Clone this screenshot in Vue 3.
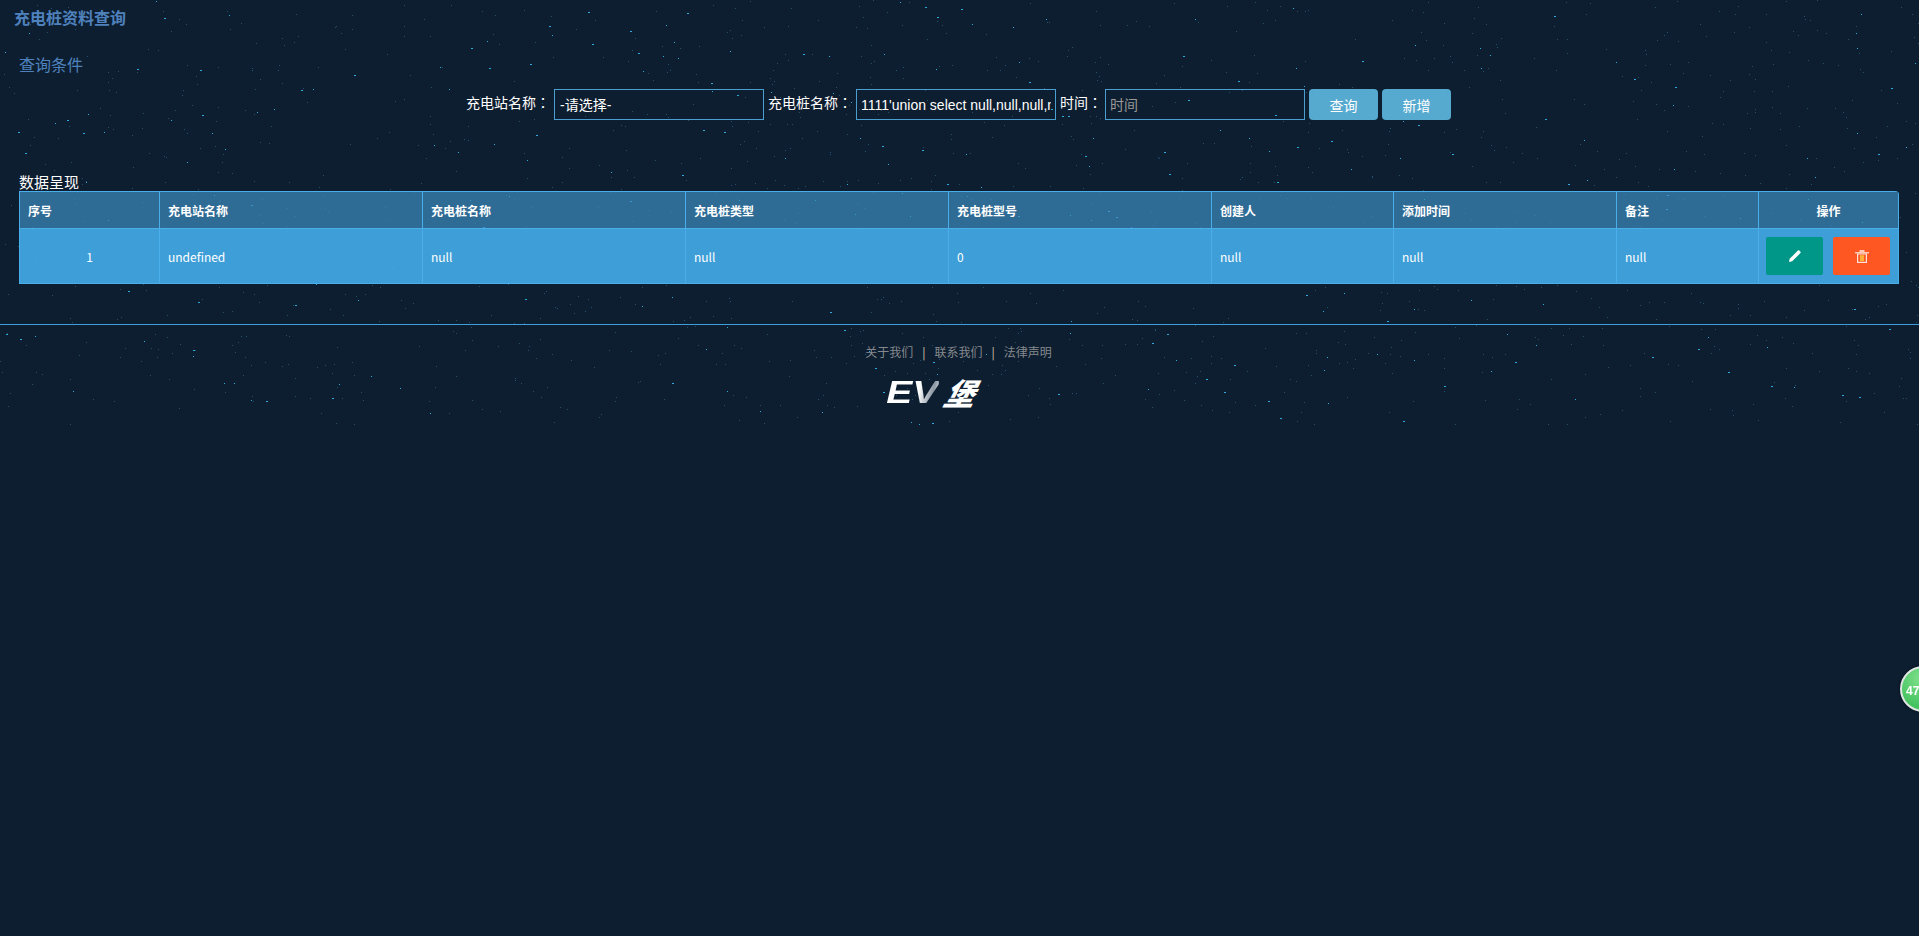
<script setup>
import { ref } from 'vue'

// seeded so the star field stays the same between loads
let seed = 4711
function rnd() {
  seed = (seed * 16807) % 2147483647
  return seed / 2147483647
}

const stars = []
for (let i = 0; i < 1700; i++) {
  const bright = rnd() > 0.82
  stars.push({
    x: Math.floor(rnd() * 1919),
    y: Math.floor(rnd() * 425),
    w: bright && rnd() > 0.6 ? 2 : 1,
    color: bright ? '#2fa8dc' : '#24506e'
  })
}

const columns = ['序号', '充电站名称', '充电桩名称', '充电桩类型', '充电桩型号', '创建人', '添加时间', '备注', '操作']
const row = ['undefined', 'null', 'null', '0', 'null', 'null', 'null']
const pileName = ref("1111'union select null,null,null,null,null,null,null")
</script>

<template>
  <div class="page">
    <svg class="stars" width="1919" height="425">
      <rect
        v-for="(s, i) in stars"
        :key="i"
        :x="s.x"
        :y="s.y"
        :width="s.w"
        height="1"
        :fill="s.color"
      />
    </svg>

    <div class="content">
      <div class="page-title">充电桩资料查询</div>
      <div class="section-title">查询条件</div>

      <form class="filters" @submit.prevent>
        <label>充电站名称<span class="colon">：</span></label>
        <select class="field station">
          <option>-请选择-</option>
        </select>
        <label>充电桩名称<span class="colon">：</span></label>
        <input v-model="pileName" class="field" type="text" />
        <label class="time-label">时间<span class="colon">：</span></label>
        <input class="field" type="text" placeholder="时间" />
        <button class="btn" type="button">查询</button>
        <button class="btn" type="button">新增</button>
      </form>

      <div class="data-title">数据呈现</div>
      <div class="table-wrap">
        <table class="data-table">
          <colgroup>
            <col style="width: 140px" />
            <col style="width: 263px" />
            <col style="width: 263px" />
            <col style="width: 263px" />
            <col style="width: 263px" />
            <col style="width: 182px" />
            <col style="width: 223px" />
            <col style="width: 142px" />
            <col />
          </colgroup>
          <thead>
            <tr>
              <th v-for="(col, index) in columns" :key="col" :class="{ center: index === 8 }">{{ col }}</th>
            </tr>
          </thead>
          <tbody>
            <tr>
              <td class="center">1</td>
              <td v-for="(cell, index) in row" :key="index">{{ cell }}</td>
              <td class="actions">
                <button class="icon-btn edit" type="button">
                  <svg width="14" height="14" viewBox="0 0 14 14">
                    <path d="M1 13l.7-3.200L9.900 1.600a1 1 0 0 1 1.400 0l1.100 1.100a1 1 0 0 1 0 1.400L4.200 12.300z" fill="#fff" />
                  </svg>
                </button>
                <button class="icon-btn remove" type="button">
                  <svg width="14" height="14" viewBox="0 0 14 14">
                    <path d="M0 3h14v1.600H0z" fill="#ffc9b5" />
                    <path d="M4.500 3V1h5v2" fill="#ffc9b5" />
                    <path d="M2 4.600h10V14H2z" fill="#ffe3d8" />
                    <path d="M3.200 5.600h7.600v7.200H3.200z" fill="#ff5722" />
                    <path d="M5 6.200h4v6H5z" fill="#ffb03a" />
                  </svg>
                </button>
              </td>
            </tr>
          </tbody>
        </table>
      </div>

      <footer class="footer">
        <div class="links">
          <a>关于我们</a>
          <span class="sep">|</span>
          <a>联系我们</a>
          <span class="sep">|</span>
          <a>法律声明</a>
        </div>
        <div class="logo">
          <span class="logo-ev">EV</span>
          <span class="logo-cn">堡</span>
        </div>
      </footer>
    </div>

    <div class="speed-ball">47</div>
  </div>
</template>

<style>
html,
body {
  background: #0d1e30;
}
</style>

<style scoped>
.page {
  position: relative;
  height: 936px;
  overflow: hidden;
  background: #0d1e30;
  font-family: "Noto Sans CJK SC", "Liberation Sans", sans-serif;
  color: #fff;
}

.stars {
  position: absolute;
  left: 0;
  top: 0;
}

.content {
  position: relative;
}

.page-title {
  height: 34px;
  line-height: 34px;
  padding-left: 14px;
  font-size: 16px;
  font-weight: bold;
  color: #4f82bd;
}

.section-title {
  height: 24px;
  line-height: 24px;
  margin-top: 18px;
  padding-left: 19px;
  font-size: 16px;
  color: #4f82bd;
}

.filters {
  display: flex;
  justify-content: center;
  align-items: flex-start;
  gap: 4px;
  margin-top: 13px;
  padding-right: 2px;
  height: 31px;
}

.filters label {
  font-size: 14px;
  line-height: 26px;
  white-space: nowrap;
}

.filters .colon {
  font-family: "Noto Sans CJK TC", sans-serif;
}

.filters .time-label {
  margin-right: -1px;
}

.field {
  box-sizing: border-box;
  width: 200px;
  height: 31px;
  padding: 0 4px;
  border: 1px solid #4a9fd0;
  border-radius: 0;
  outline: none;
  background: transparent;
  color: #fff;
  font-family: "Liberation Sans", "Noto Sans CJK SC", sans-serif;
  font-size: 14px;
}

.field::placeholder {
  color: #999;
}

.station {
  width: 210px;
  padding-left: 5px;
  appearance: none;
}

.station option {
  color: #333;
}

.btn {
  width: 69px;
  height: 31px;
  padding: 0;
  border: none;
  border-radius: 4px;
  background: #56a9cf;
  color: #fff;
  font-family: inherit;
  font-size: 14px;
}

.data-title {
  height: 20px;
  line-height: 22px;
  margin-top: 51px;
  padding-left: 19px;
  font-size: 15px;
}

.table-wrap {
  margin: 0 19px;
  width: 1880px;
  border-top-right-radius: 4px;
  overflow: hidden;
}

.data-table {
  width: 100%;
  border-collapse: collapse;
  table-layout: fixed;
  font-size: 12px;
}

.data-table th,
.data-table td {
  border: 1px solid #4aaeea;
  padding: 0 8px;
  text-align: left;
}

.data-table th {
  height: 36px;
  background: rgba(62, 145, 197, 0.68);
  font-weight: bold;
}

.data-table td {
  height: 54px;
  background: rgba(65, 163, 222, 0.96);
}

.data-table .center {
  text-align: center;
}

.data-table .actions {
  padding: 0 1px 0 0;
  text-align: center;
  white-space: nowrap;
}

.icon-btn {
  display: inline-flex;
  align-items: center;
  justify-content: center;
  width: 57px;
  height: 38px;
  padding: 0;
  border: none;
  border-radius: 2px;
  vertical-align: middle;
}

.icon-btn + .icon-btn {
  margin-left: 10px;
}

.edit {
  background: #009688;
}

.remove {
  background: #ff5722;
}

.footer {
  margin-top: 40px;
  border-top: 1px solid #3f9fdc;
}

.links {
  display: flex;
  justify-content: center;
  gap: 9px;
  margin-top: 18px;
  margin-right: 2px;
  height: 18px;
  line-height: 18px;
  font-size: 12px;
  color: #85898d;
}

.links .sep {
  color: #d7c6a8;
}

.logo {
  display: flex;
  justify-content: center;
  align-items: center;
  gap: 12px;
  margin-top: 16px;
  margin-right: 52px;
  height: 30px;
  font-style: italic;
  font-weight: bold;
}

.logo-ev {
  display: inline-block;
  font-family: "Liberation Sans", sans-serif;
  font-size: 32px;
  line-height: 30px;
  transform: scaleX(1.22);
  background: linear-gradient(100deg, #fff 60%, #8b97a3 85%, #fff 100%);
  -webkit-background-clip: text;
  background-clip: text;
  color: transparent;
}

.logo-cn {
  display: inline-block;
  font-size: 30px;
  line-height: 30px;
  font-weight: 900;
  color: #fff;
  transform: skewX(-14deg);
}

.speed-ball {
  position: fixed;
  left: 1900px;
  top: 666px;
  box-sizing: border-box;
  width: 46px;
  height: 46px;
  padding-left: 4px;
  border: 2px solid #dfe6e4;
  border-radius: 50%;
  background: radial-gradient(circle at 45% 25%, #7fe08c, #45c35f 70%);
  box-shadow: 0 0 3px rgba(0, 0, 0, 0.6);
  color: #fff;
  font-family: "Liberation Sans", sans-serif;
  font-size: 12px;
  font-weight: bold;
  line-height: 46px;
  white-space: nowrap;
}
</style>
